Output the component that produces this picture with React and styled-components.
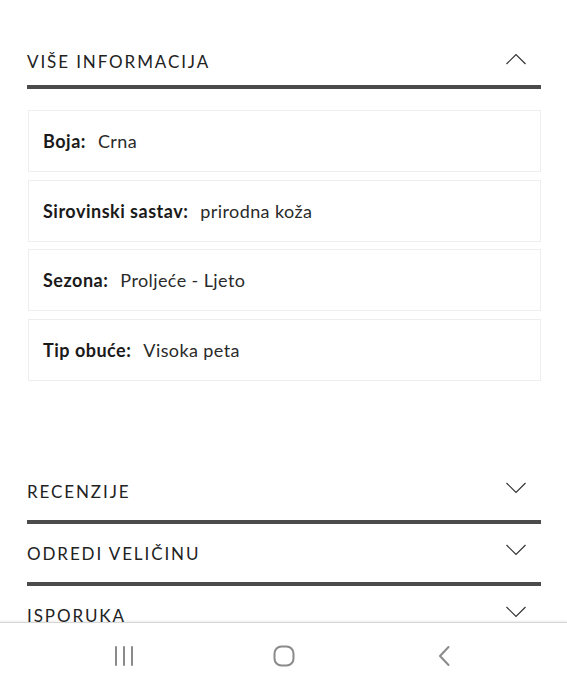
import React from "react";
import styled, { createGlobalStyle } from "styled-components";

const GlobalStyle = createGlobalStyle`
  html, body {
    margin: 0;
    padding: 0;
    background: #ffffff;
  }
  body {
    font-family: Lato, "Noto Sans", "Liberation Sans", sans-serif;
    color: #1f1f1f;
    -webkit-font-smoothing: antialiased;
  }
`;

const Page = styled.div`
  padding: 0 26px 80px 27px;
`;

const Section = styled.section`
  margin-top: ${(p) => p.$mt || 0}px;
`;

const Header = styled.div`
  display: flex;
  justify-content: space-between;
  align-items: flex-start;
  padding-top: ${(p) => p.$pt}px;
  padding-bottom: ${(p) => p.$pb}px;
  border-bottom: 4px solid #4b4b4b;
`;

const Title = styled.h2`
  margin: 0;
  font-size: 17px;
  line-height: 24px;
  font-weight: 400;
  letter-spacing: 1.9px;
  color: #222222;
  text-transform: uppercase;
`;

const Chevron = styled.svg`
  display: block;
  width: 22px;
  height: 12px;
  margin-top: ${(p) => p.$mt}px;
  margin-right: 14px;
  flex-shrink: 0;
`;

const List = styled.div`
  display: flex;
  flex-direction: column;
  gap: 7.5px;
  margin-top: 21px;
  margin-left: 1px;
`;

const Row = styled.div`
  height: 62px;
  box-sizing: border-box;
  border: 1px solid #eeeeee;
  display: flex;
  align-items: center;
  padding-left: 14px;
  font-size: 18px;
  line-height: 24px;
`;

const Label = styled.span`
  font-weight: 700;
  letter-spacing: 0.5px;
  color: #1a1a1a;
  margin-right: 12px;
`;

const Value = styled.span`
  font-weight: 400;
  letter-spacing: 0.4px;
  color: #2a2a2a;
`;

const NavBar = styled.nav`
  position: fixed;
  left: 0;
  right: 0;
  bottom: 0;
  height: 67px;
  background: #ffffff;
  border-top: 1px solid #d6d6d6;
  box-shadow: 0 -1px 2px rgba(0, 0, 0, 0.08);
  display: flex;
  justify-content: center;
  align-items: center;
`;

const NavCell = styled.div`
  width: 160px;
  display: flex;
  justify-content: center;
  align-items: center;
  padding-bottom: 1px;
`;

const NavIcon = styled.svg`
  display: block;
  width: ${(p) => p.$w}px;
  height: 22px;
`;

const ChevronIcon = ({ up, mt }) => (
  <Chevron $mt={mt} viewBox="0 0 22 12">
    <polyline
      points={up ? "1.5,11 11,1.5 20.5,11" : "1.5,1 11,10.5 20.5,1"}
      fill="none"
      stroke="#333333"
      strokeWidth="1.2"
    />
  </Chevron>
);

const details = [
  ["Boja:", "Crna"],
  ["Sirovinski sastav:", "prirodna koža"],
  ["Sezona:", "Proljeće - Ljeto"],
  ["Tip obuće:", "Visoka peta"],
];

const closed = ["Recenzije", "Odredi veličinu", "Isporuka"];

export default function App() {
  return (
    <>
      <GlobalStyle />
      <Page>
        <Section>
          <Header $pt={50} $pb={11}>
            <Title>Više informacija</Title>
            <ChevronIcon up mt={3} />
          </Header>
          <List>
            {details.map(([l, v]) => (
              <Row key={l}>
                <Label>{l}</Label>
                <Value>{v}</Value>
              </Row>
            ))}
          </List>
        </Section>
        {closed.map((t, i) => (
          <Section key={t} $mt={i === 0 ? 81 : 0}>
            <Header $pt={18} $pb={16}>
              <Title>{t}</Title>
              <ChevronIcon mt={2} />
            </Header>
          </Section>
        ))}
      </Page>
      <NavBar>
        <NavCell>
          <NavIcon $w={22} viewBox="0 0 22 22">
            <g stroke="#8a8a8a" strokeWidth="2" strokeLinecap="round">
              <line x1="3" y1="2" x2="3" y2="20" />
              <line x1="11" y1="2" x2="11" y2="20" />
              <line x1="19" y1="2" x2="19" y2="20" />
            </g>
          </NavIcon>
        </NavCell>
        <NavCell>
          <NavIcon $w={22} viewBox="0 0 22 22">
            <rect x="1.5" y="1.5" width="19" height="19" rx="7" fill="none" stroke="#8a8a8a" strokeWidth="2" />
          </NavIcon>
        </NavCell>
        <NavCell>
          <NavIcon $w={14} viewBox="0 0 14 22">
            <polyline points="11.5,2 3,11 11.5,20" fill="none" stroke="#8a8a8a" strokeWidth="2" strokeLinecap="round" strokeLinejoin="round" />
          </NavIcon>
        </NavCell>
      </NavBar>
    </>
  );
}
